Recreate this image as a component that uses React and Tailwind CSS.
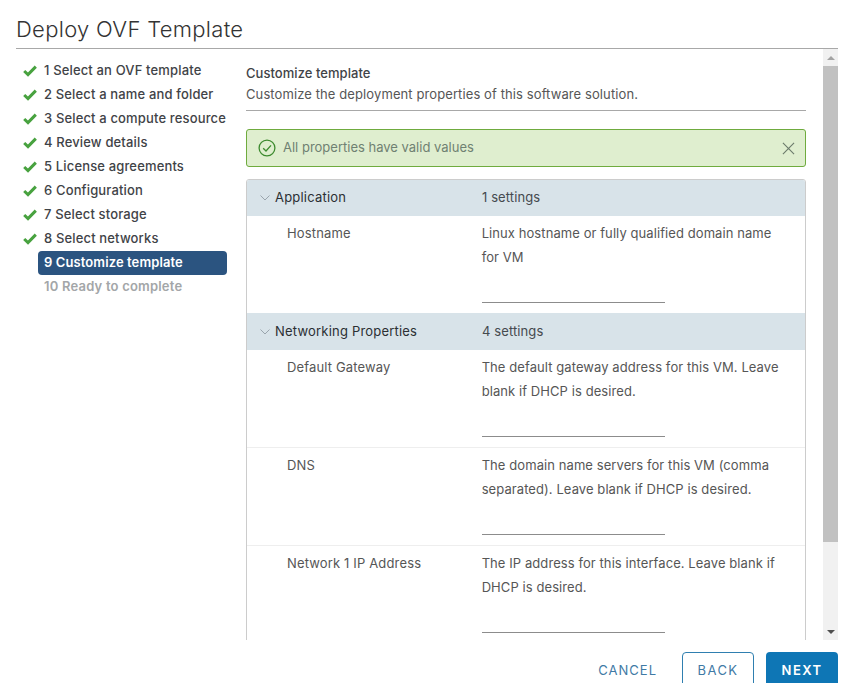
import React from "react";

const steps = [
  "1 Select an OVF template",
  "2 Select a name and folder",
  "3 Select a compute resource",
  "4 Review details",
  "5 License agreements",
  "6 Configuration",
  "7 Select storage",
  "8 Select networks",
];

function Check() {
  return (
    <svg viewBox="0 0 14 12" className="w-[14px] h-[12px] shrink-0 text-[#48a23f]" fill="none" stroke="currentColor" strokeWidth="3">
      <path d="M1.2 6 L5 9.6 L12.8 1.6" />
    </svg>
  );
}

function Chevron() {
  return (
    <svg viewBox="0 0 10 6" className="w-[10px] h-[6px] text-[#9aa5ad]" fill="none" stroke="currentColor" strokeWidth="1">
      <path d="M0.5 0.5 L5 5 L9.5 0.5" />
    </svg>
  );
}

function Group({ name, count, h }) {
  return (
    <div className={`flex ${h} items-center bg-[#d8e3e9] text-[13px] text-[#2b2f33]`}>
      <div className="w-[28px] pl-[13px] flex items-center"><Chevron /></div>
      <div className="w-[207px] tracking-[0.2px]">{name}</div>
      <div className="tracking-[0.1px] text-[#454a4e]">{count}</div>
    </div>
  );
}

function Row({ label, desc, h, border }) {
  return (
    <div className={`flex ${h} pt-[5px] ${border ? "border-b border-[#eeeeee]" : ""} text-[13px] text-[#565656]`}>
      <div className="w-[235px] pl-[40px] leading-[24px] tracking-[0.15px]">{label}</div>
      <div className="w-[324px] tracking-[0.08px]">
        <div className="w-[300px] leading-[24px] h-[72px]">{desc}</div>
        <div className="w-[183px] border-b border-[#8c8c8c] mt-[9px]" />
      </div>
    </div>
  );
}

export default function App() {
  return (
    <div className="w-[844px] h-[683px] overflow-hidden bg-white flex flex-col font-['Inter',sans-serif]">
      <div className="mx-[16px] w-[822px] h-[49px] shrink-0 border-b border-[#a8a8a8] pt-[14px] text-[22px] leading-[30px] font-light tracking-[0.3px] text-[#333333]">
        Deploy OVF Template
      </div>

      <div className="flex h-[591px] shrink-0 overflow-hidden">
        <div className="w-[246px] shrink-0 pt-[10px] pl-[23px]">
          {steps.map((s) => (
            <div key={s} className="flex h-[24px] items-center text-[13px] font-medium tracking-[0.15px] text-[#3f4347]">
              <Check />
              <span className="ml-[7px] whitespace-nowrap">{s}</span>
            </div>
          ))}
          <div className="ml-[15px] w-[189px] h-[24px] rounded-[4px] bg-[#2b5480] pl-[6px] flex items-center text-[13px] font-semibold tracking-[0.1px] text-white whitespace-nowrap">
            9 Customize template
          </div>
          <div className="ml-[21px] h-[24px] flex items-center text-[13px] font-semibold tracking-[0.2px] text-[#a3a6a8] whitespace-nowrap">
            10 Ready to complete
          </div>
        </div>

        <div className="w-[560px] shrink-0 overflow-hidden">
          <div className="h-[62px] border-b border-[#a8a8a8] pt-[14px]">
            <div className="text-[13px] leading-[21px] font-medium tracking-[0.05px] text-[#3f4347]">Customize template</div>
            <div className="text-[13px] leading-[21px] tracking-[0.1px] text-[#565656] whitespace-nowrap">Customize the deployment properties of this software solution.</div>
          </div>
          <div className="mt-[18px] h-[38px] rounded-[3px] border border-[#6fab3e] bg-[#dfeecf] flex items-center pl-[11px] pr-[10px]">
            <svg viewBox="0 0 18 18" className="w-[18px] h-[18px] text-[#3c8a2e]" fill="none" stroke="currentColor" strokeWidth="1.3">
              <circle cx="9" cy="9" r="7.9" />
              <path d="M5.2 9.2 L8 12 L13 6.4" />
            </svg>
            <span className="ml-[7px] text-[13px] text-[#6f8172]">All properties have valid values</span>
            <svg viewBox="0 0 14 14" className="ml-auto w-[13px] h-[13px] text-[#6b7a6b]" fill="none" stroke="currentColor" strokeWidth="1.2">
              <path d="M1 1 L13 13 M13 1 L1 13" />
            </svg>
          </div>
          <div className="mt-[12px] border border-[#cccccc] rounded-t-[3px] overflow-hidden">
            <Group name="Application" count="1 settings" h="h-[36px]" />
            <Row label="Hostname" desc="Linux hostname or fully qualified domain name for VM" h="h-[97px]" />
            <Group name="Networking Properties" count="4 settings" h="h-[37px]" />
            <Row label="Default Gateway" desc="The default gateway address for this VM. Leave blank if DHCP is desired." h="h-[98px]" border />
            <Row label="DNS" desc="The domain name servers for this VM (comma separated). Leave blank if DHCP is desired." h="h-[98px]" border />
            <Row label="Network 1 IP Address" desc="The IP address for this interface. Leave blank if DHCP is desired." h="h-[98px]" />
          </div>
        </div>

        <div className="ml-[17px] w-[15px] h-[591px] shrink-0 bg-[#f1f1f1] flex flex-col items-center">
          <div className="h-[17px] flex items-center justify-center">
            <div className="w-0 h-0 border-x-[4px] border-x-transparent border-b-[4px] border-b-[#a3a3a3]" />
          </div>
          <div className="w-full h-[476px] bg-[#c1c1c1]" />
          <div className="mt-auto h-[17px] flex items-center justify-center">
            <div className="w-0 h-0 border-x-[4px] border-x-transparent border-t-[4px] border-t-[#505050]" />
          </div>
        </div>
      </div>

      <div className="flex justify-end items-start pt-[12px] pr-[6px] text-[13px]">
        <div className="h-[38px] flex items-center tracking-[1px] text-[#3f7aa5] mr-[25px]">CANCEL</div>
        <div className="w-[72px] h-[38px] rounded-[4px] border border-[#2f7fb0] tracking-[1.4px] text-[#3f7aa5] flex items-center justify-center">BACK</div>
        <div className="ml-[12px] w-[72px] h-[38px] rounded-[4px] bg-[#0e76b5] tracking-[1.4px] text-white font-semibold flex items-center justify-center">NEXT</div>
      </div>
    </div>
  );
}
